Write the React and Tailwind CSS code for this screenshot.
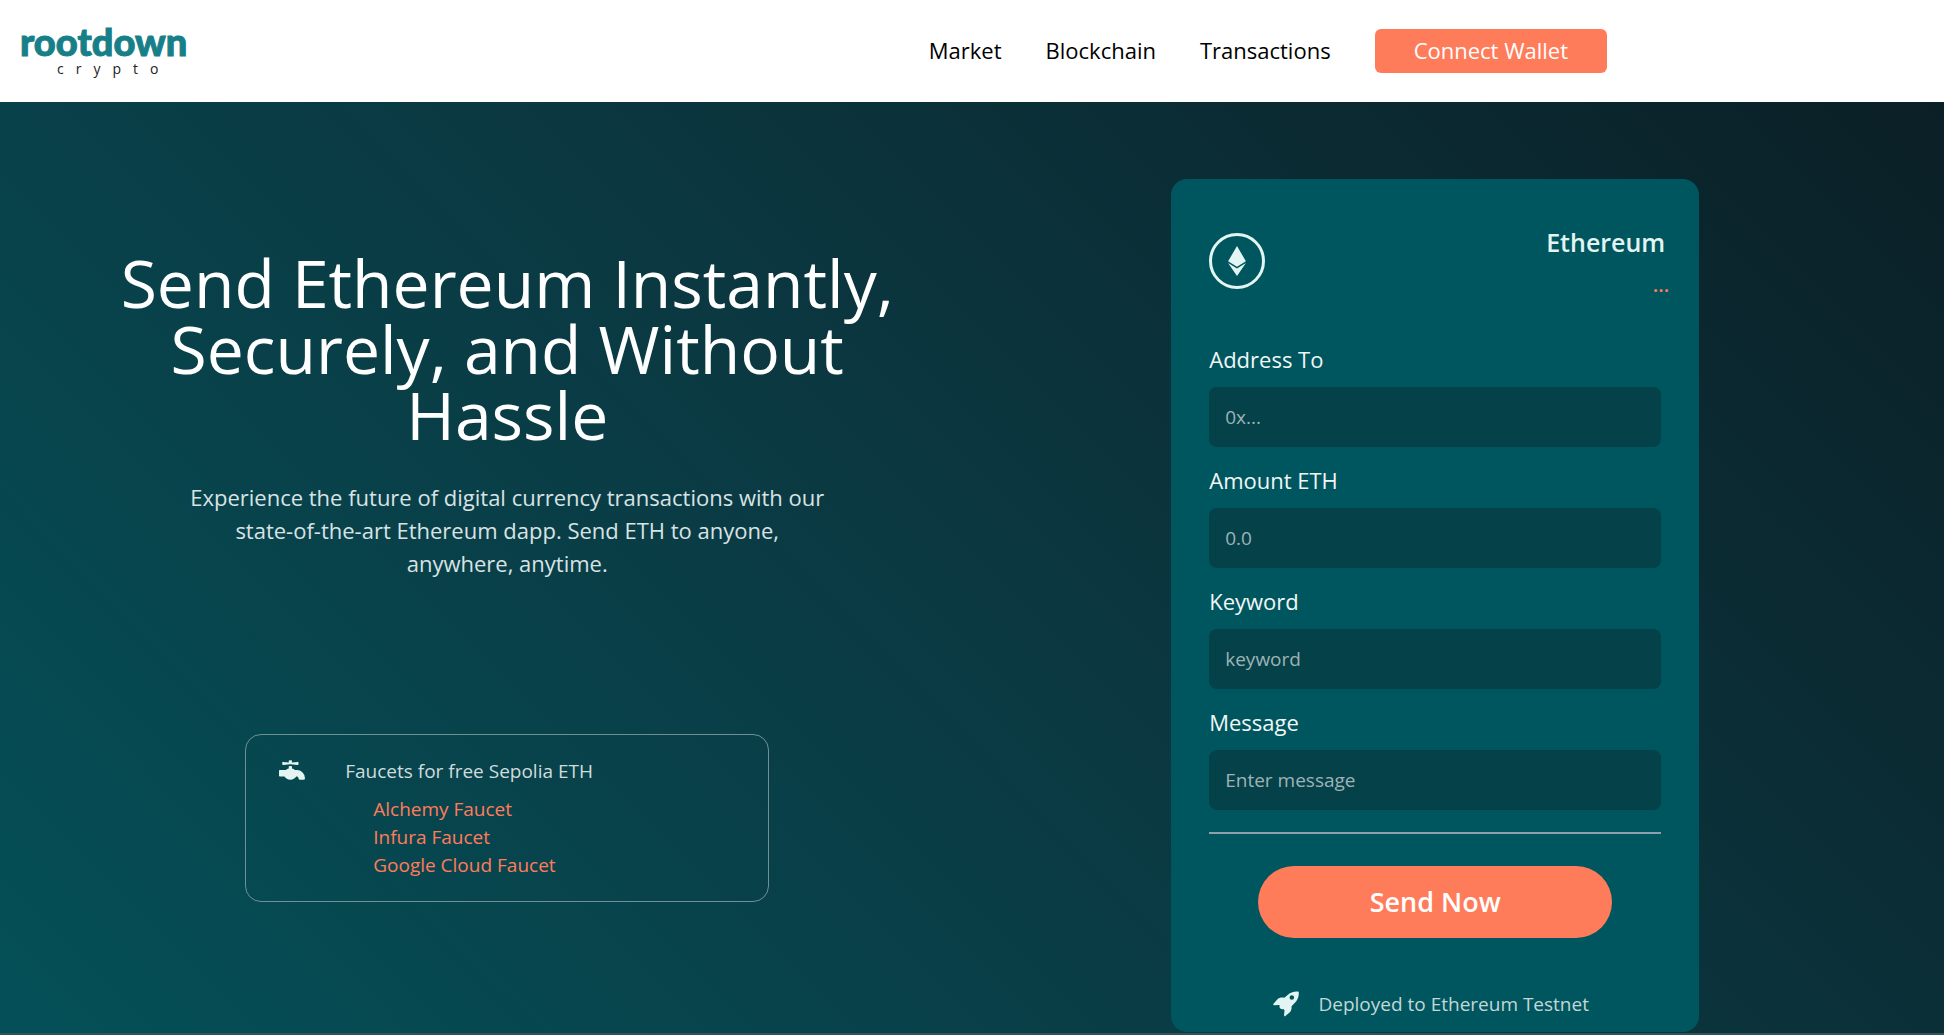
import { FaEthereum, FaFaucet } from "react-icons/fa";

const navLinks = ["Market", "Blockchain", "Transactions"];
const faucets = ["Alchemy Faucet", "Infura Faucet", "Google Cloud Faucet"];
const fields = [
  { id: "addressTo", label: "Address To", placeholder: "0x..." },
  { id: "amount", label: "Amount ETH", placeholder: "0.0" },
  { id: "keyword", label: "Keyword", placeholder: "keyword" },
  { id: "message", label: "Message", placeholder: "Enter message" },
];

function Logo() {
  return (
    <a href="#" className="flex flex-col items-center pb-[6px] font-['Lato',sans-serif]">
      <span className="text-[38px] leading-10 font-black text-[#177f88] [-webkit-text-stroke:1px_#177f88]">rootdown</span>
      <span className="pt-0.5 pl-5 font-['Open_Sans',sans-serif] text-sm leading-3 tracking-[12px] text-[#222]">crypto</span>
    </a>
  );
}

function RocketIcon({ className }) {
  return (
    <svg viewBox="0 0 80 78" fill="currentColor" className={className} aria-hidden="true">
      <path
        fillRule="evenodd"
        d="M79 1C66-1 53 4 45 11L35 20C27 18 18 20 13 25L1 39C0 41 1 43 4 43L18 42C22 43 20 46 20 49C21 53 27 56 31 55C35 55 36 58 35 62L34 74C34 77 36 78 38 76L51 65C56 60 58 53 57 46L66 37C76 28 81 15 79 1ZM58 12A7 7 0 1 0 58 26A7 7 0 1 0 58 12Z"
      />
    </svg>
  );
}

function Header() {
  return (
    <header className="flex h-[102px] items-center justify-between bg-white pr-[337px] pl-5">
      <Logo />
      <nav className="flex items-center gap-11 text-[22px] leading-7 text-black">
        {navLinks.map((name) => (
          <a key={name} href="#" className="pb-0.5">{name}</a>
        ))}
        <button type="button" className="h-11 rounded-md bg-[#ff7c5b] px-[39px] pb-0.5 text-white">Connect Wallet</button>
      </nav>
    </header>
  );
}

function Faucets() {
  return (
    <section className="flex h-[168px] w-[524px] rounded-2xl border border-[#6f9195] pt-[22px] pl-[33px] text-[19px]">
      <FaFaucet className="size-[26px] text-[#e2f5f2]" />
      <div className="pl-10">
        <h2 className="leading-7 text-[#cfdcdd]">Faucets for free Sepolia ETH</h2>
        <ul className="pt-[10px] pl-7 text-[#ff7c5b]">
          {faucets.map((name) => (
            <li key={name} className="leading-7">
              <a href="#">{name}</a>
            </li>
          ))}
        </ul>
      </div>
    </section>
  );
}

function Hero() {
  return (
    <div className="flex flex-col items-center pt-[147px] text-center">
      <h1 className="max-w-[800px] text-[66px] leading-[66px] text-white">
        Send Ethereum Instantly, Securely, and Without Hassle
      </h1>
      <p className="max-w-[640px] pt-[34px] text-[22px] leading-[33px] text-[#d9e3e4]">
        Experience the future of digital currency transactions with our state-of-the-art Ethereum dapp. Send ETH to
        anyone, anywhere, anytime.
      </p>
      <div className="pt-[154px] text-left">
        <Faucets />
      </div>
    </div>
  );
}

function TransferCard() {
  return (
    <form className="w-[528px] rounded-2xl bg-[#00565e] px-[38px] pt-[46px] pb-[14px]">
      <div className="flex h-[116px] items-start justify-between">
        <span className="mt-2 flex size-14 items-center justify-center rounded-full border-3 border-[#e2f5f2]">
          <FaEthereum className="size-[30px] text-[#e2f5f2]" />
        </span>
        <div className="-mr-2 text-right">
          <h2 className="pr-1 text-[25px] leading-[34px] font-semibold text-[#e2f5f2]">Ethereum</h2>
          <p className="pt-3 text-xl font-semibold text-[#ff7c5b]">...</p>
        </div>
      </div>
      {fields.map((field) => (
        <div key={field.id} className="pb-[15px]">
          <label htmlFor={field.id} className="block h-[46px] text-[22px] leading-9 text-[#f2f7f7]">{field.label}</label>
          <input
            id={field.id}
            type="text"
            placeholder={field.placeholder}
            className="block h-[60px] w-full rounded-lg bg-[#044149] px-4 text-[19px] text-white outline-none placeholder:text-[#9fb3b6]"
          />
        </div>
      ))}
      <hr className="mt-[7px] border-t-2 border-[#8e9fae]" />
      <button
        type="submit"
        className="mx-auto mt-8 block h-[72px] w-[354px] rounded-full bg-[#ff7c5b] text-[27px] font-semibold text-white"
      >
        Send Now
      </button>
      <div className="flex items-center justify-center gap-[19px] pt-[52px] pr-2">
        <RocketIcon className="size-[26px] text-[#e2f5f2]" />
        <p className="text-[19px] leading-7 text-[#c3d6d8]">Deployed to Ethereum Testnet</p>
      </div>
    </form>
  );
}

export default function App() {
  return (
    <div className="flex min-h-screen flex-col font-['Open_Sans',sans-serif]">
      <Header />
      <main className="grid flex-1 grid-cols-[1015fr_842fr] border-b-2 border-[#35525b] bg-linear-[45deg,#045058,#0b3841_50%,#0b1f26] pr-[88px]">
        <Hero />
        <div className="flex items-start justify-center pt-[77px]">
          <TransferCard />
        </div>
      </main>
    </div>
  );
}
